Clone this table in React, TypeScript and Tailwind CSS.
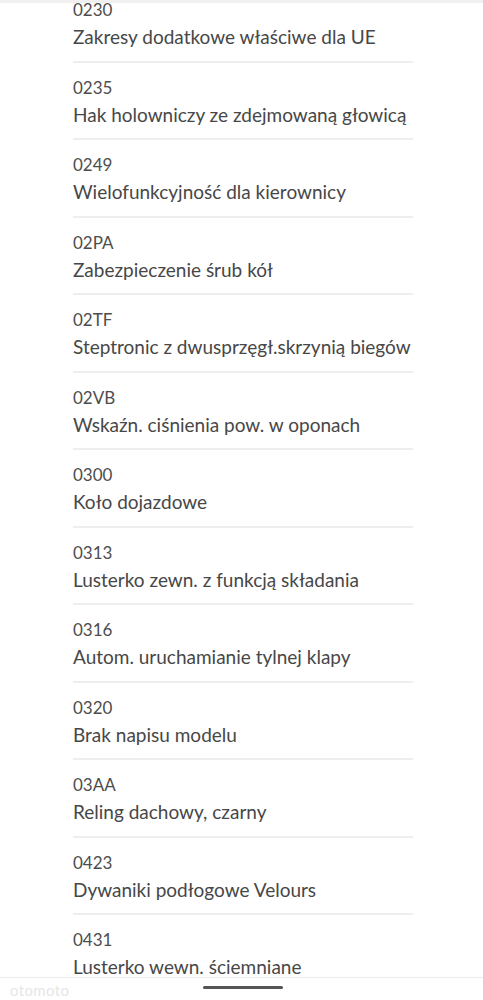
type Equipment = {
  code: string
  name: string
}

const items: Equipment[] = [
  {code: '0230', name: 'Zakresy dodatkowe właściwe dla UE'},
  {code: '0235', name: 'Hak holowniczy ze zdejmowaną głowicą'},
  {code: '0249', name: 'Wielofunkcyjność dla kierownicy'},
  {code: '02PA', name: 'Zabezpieczenie śrub kół'},
  {code: '02TF', name: 'Steptronic z dwusprzęgł.skrzynią biegów'},
  {code: '02VB', name: 'Wskaźn. ciśnienia pow. w oponach'},
  {code: '0300', name: 'Koło dojazdowe'},
  {code: '0313', name: 'Lusterko zewn. z funkcją składania'},
  {code: '0316', name: 'Autom. uruchamianie tylnej klapy'},
  {code: '0320', name: 'Brak napisu modelu'},
  {code: '03AA', name: 'Reling dachowy, czarny'},
  {code: '0423', name: 'Dywaniki podłogowe Velours'},
  {code: '0431', name: 'Lusterko wewn. ściemniane'}
]

const EquipmentRow = ({code, name}: Equipment) => {
  return (
    <li className="pt-[13px] pb-[9.5px] border-b-2 border-[#eeeeee]">
      <p className="text-[17px] leading-6 text-[#4d4d4d]">{code}</p>
      <p className="mt-px text-[19px] leading-[28px] text-[#474747] whitespace-nowrap">{name}</p>
    </li>
  )
}

const App = () => {
  return (
    <div className="relative w-[483px] h-[1000px] overflow-hidden bg-white font-['Lato','Open_Sans',sans-serif]">
      <ul className="-mt-[15px] ml-[73px] w-[340px]">
        {items.map((item: Equipment) => (
          <EquipmentRow key={item.code} code={item.code} name={item.name} />
        ))}
      </ul>

      {/* header shadow */}
      <div className="absolute top-0 left-0 right-0 h-[3px] bg-[#f0f0f0]" />

      {/* system nav bar */}
      <div className="absolute bottom-0 left-0 right-0 h-[23px] bg-white border-t border-[#ececec]">
        <span className="absolute left-[10px] top-[1px] text-[15px] tracking-wide text-[#e6e6e6]">
          otomoto
        </span>
        <div className="absolute left-[203px] top-[8px] w-[80px] h-[3px] rounded-full bg-[#555555]" />
      </div>
    </div>
  )
}

export default App
